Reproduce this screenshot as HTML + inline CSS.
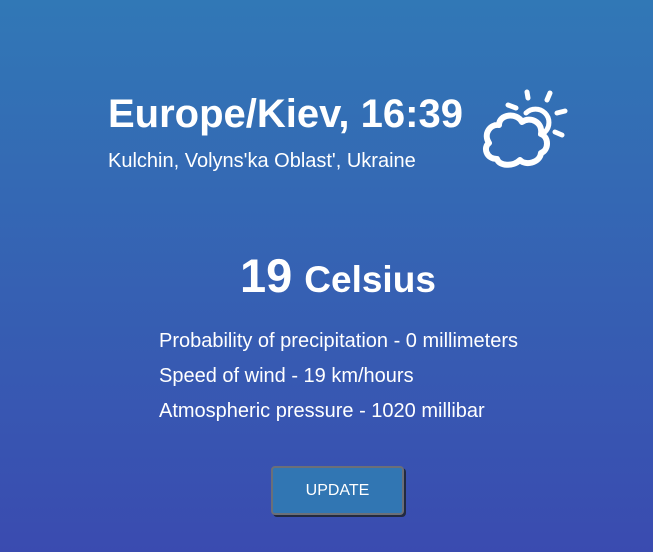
<!DOCTYPE html>
<html><head><style>
html,body{margin:0;padding:0;}
body{width:653px;height:552px;overflow:hidden;background:linear-gradient(to bottom,#3178b6,#3a4bb0);font-family:"Liberation Sans",Arial,sans-serif;color:#fff;position:relative;}
.a{position:absolute;white-space:nowrap;}
h1{margin:0;font-size:40px;font-weight:bold;}
.t{font-size:20px;}
.btn{position:absolute;left:271px;top:466px;width:129px;height:45px;background:#3176b3;border:2px solid #6b6f78;border-radius:4px;box-shadow:2px 2px 0 #222a40;color:#fff;font-size:16px;text-align:center;line-height:45px;}
</style></head><body>
<div class="a" style="left:108px;top:92px"><h1>Europe/Kiev, 16:39</h1></div>
<div class="a" style="left:108px;top:150px;font-size:20px">Kulchin, Volyns'ka Oblast', Ukraine</div>
<svg class="a" style="left:475px;top:80px" width="100" height="100" viewBox="0 0 100 100" fill="none" stroke="#fff" stroke-linecap="round">
<path d="M51 33 A13 13 0 1 1 70 52" stroke-width="5"/>
<path d="M52 12 L53 18 M75 13 L72 20 M82 33 L90 31 M80 52 L87 55 M33 25 L41 28" stroke-width="5"/>
<path d="M24 45 C24 34 42 32 47 42 C55 36 68 42 66 54 C74 57 74 70 66 73 C65 83 50 86 45 80 C38 87 24 86 22 79 C11 79 8 67 14 63 C8 54 15 44 24 45 Z" stroke-width="6" stroke-linejoin="round"/>
</svg>
<div class="a" style="left:240px;top:248px;font-weight:bold"><span style="font-size:47px">19</span><span style="font-size:37px;margin-left:12px">Celsius</span></div>
<div class="a t" style="left:159px;top:330px">Probability of precipitation - 0 millimeters</div>
<div class="a t" style="left:159px;top:365px">Speed of wind - 19 km/hours</div>
<div class="a t" style="left:159px;top:400px">Atmospheric pressure - 1020 millibar</div>
<div class="btn">UPDATE</div>
</body></html>
